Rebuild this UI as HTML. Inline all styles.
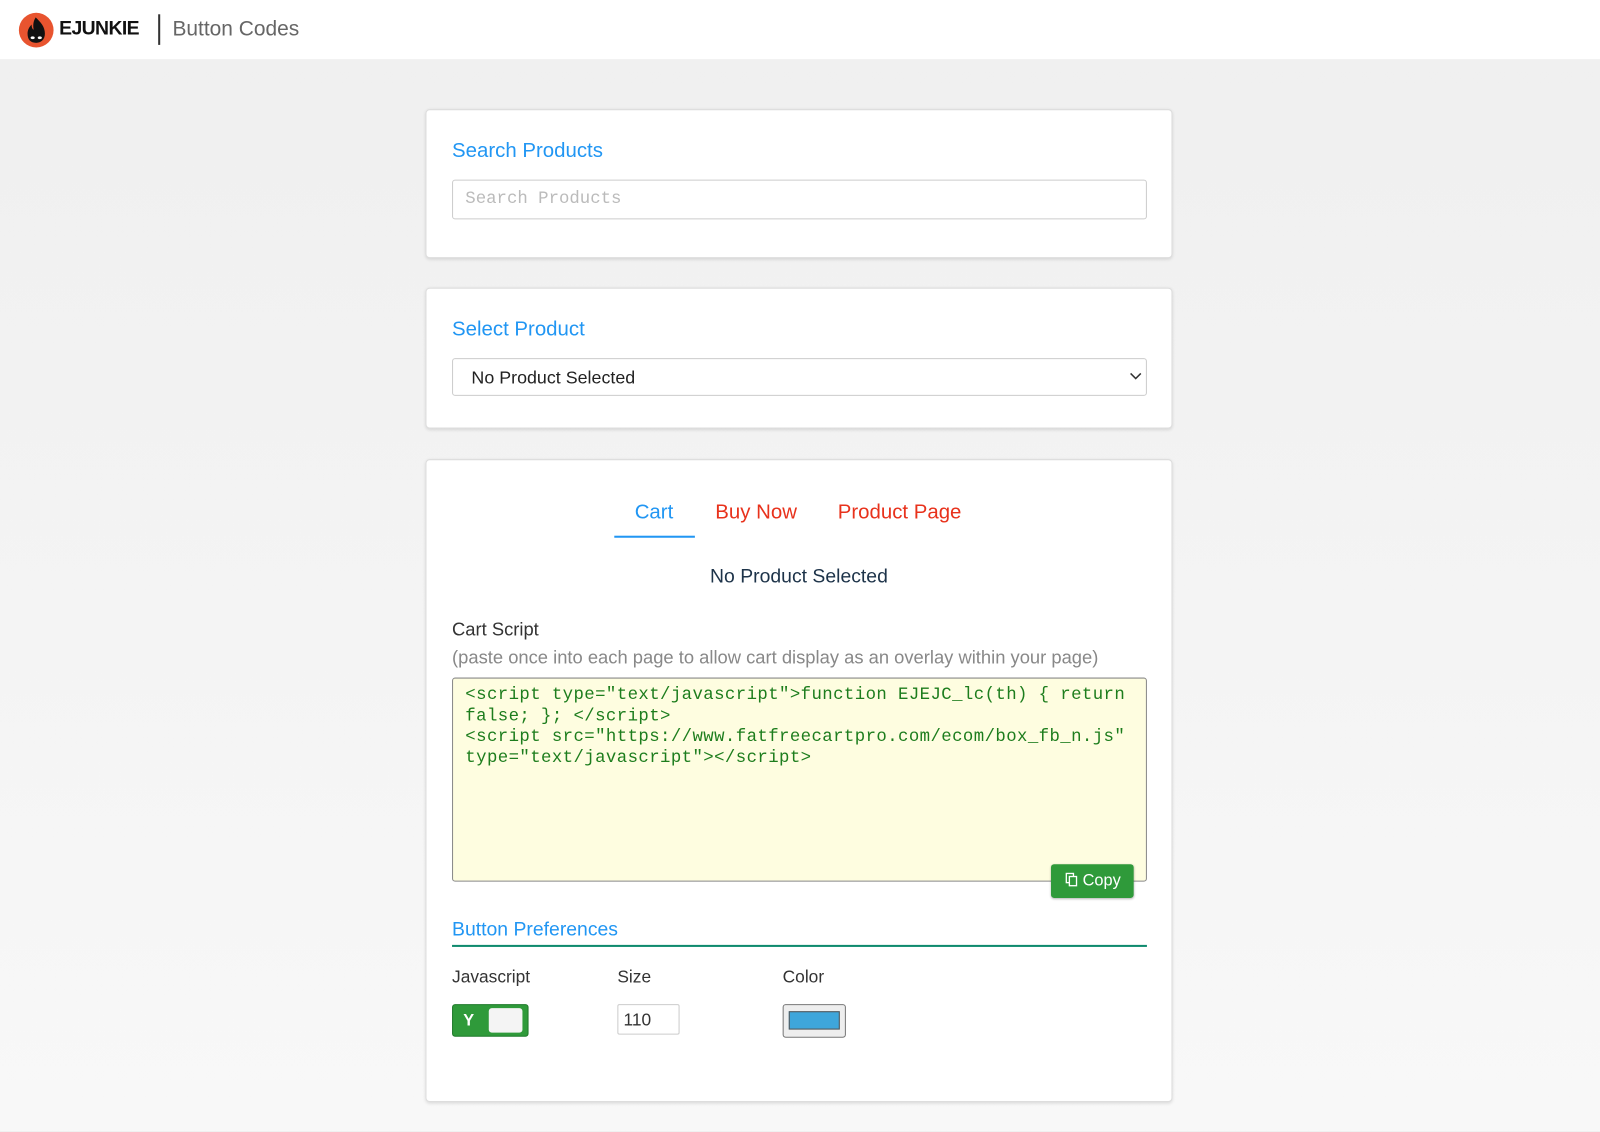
<!DOCTYPE html>
<html><head><meta charset="utf-8"><style>
*{box-sizing:border-box;margin:0;padding:0}
html,body{width:1600px;height:1131px;overflow:hidden}
body{font-family:"Liberation Sans",sans-serif;background:linear-gradient(#efefef,#f8f8f8);color:#333}
#w{position:absolute;left:0;top:0;width:1568px;height:1109px;transform:scale(1.0204);transform-origin:0 0}
.hdr{position:absolute;left:0;top:0;width:1568px;height:58px;background:#fff}
.card{position:absolute;left:417px;width:732px;background:#fff;border:1px solid #ddd;border-radius:4px;box-shadow:0 1px 3px rgba(0,0,0,.12)}
.abs{position:absolute}
.blue{color:#2196f3}
</style></head><body><div id="w">
<div class="hdr">
 <svg class="abs" style="left:18px;top:12px" width="35" height="35" viewBox="0 0 35 35"><circle cx="17.5" cy="17.5" r="17" fill="#e8542f"/><path d="M17 5 C22 10 26 14 26 21 C26 27 22 30 17.5 30 C12 30 9 27 9 21 C9 17 11 14 13 12 C13 15 14 17 15 17 C14 12 15 8 17 5Z" fill="#111"/><ellipse cx="14" cy="25" rx="2" ry="1.3" fill="#fff"/><ellipse cx="21" cy="25" rx="2" ry="1.3" fill="#fff"/></svg>
 <div class="abs" style="left:58px;top:18px;font-size:19px;font-weight:bold;color:#111;letter-spacing:-0.6px">EJUNKIE</div>
 <div class="abs" style="left:155px;top:14px;width:2px;height:30px;background:#333"></div>
 <div class="abs" style="left:169px;top:17px;font-size:20.5px;color:#666">Button Codes</div>
</div>

<div class="card" style="top:107px;height:146px">
 <div class="abs blue" style="left:25px;top:29px;font-size:20px">Search Products</div>
 <div class="abs" style="left:25px;top:68px;width:681px;height:39px;border:1px solid #ccc;border-radius:3px;font-family:'Liberation Mono',monospace;font-size:17px;color:#bbb;padding:9px 12px">Search Products</div>
</div>

<div class="card" style="top:282px;height:138px">
 <div class="abs blue" style="left:25px;top:29px;font-size:20px">Select Product</div>
 <div class="abs" style="left:25px;top:68px;width:681px;height:37px;border:1px solid #ccc;border-radius:3px;font-size:17.5px;color:#222;padding:8px 18px">No Product Selected</div>
 <svg class="abs" style="left:689px;top:82px" width="12" height="8" viewBox="0 0 12 8"><path d="M1 1l5 5 5-5" stroke="#333" stroke-width="1.5" fill="none"/></svg>
</div>

<div class="card" style="top:450px;height:630px">
 <div class="abs blue" style="left:204px;top:40px;font-size:20px">Cart</div>
 <div class="abs" style="left:184px;top:74px;width:79px;height:2px;background:#2196f3"></div>
 <div class="abs" style="left:283px;top:40px;font-size:20px;color:#e8321c">Buy Now</div>
 <div class="abs" style="left:403px;top:40px;font-size:20px;color:#e8321c">Product Page</div>
 <div class="abs" style="left:0;width:730px;top:104px;text-align:center;font-size:19px;color:#1d3349">No Product Selected</div>
 <div class="abs" style="left:25px;top:156px;font-size:18px;color:#333">Cart Script</div>
 <div class="abs" style="left:25px;top:183px;font-size:18px;color:#888">(paste once into each page to allow cart display as an overlay within your page)</div>
 <div class="abs" style="left:25px;top:213px;width:681px;height:200px;border:1px solid #888;border-radius:3px;background:#fefde0;padding:7px 12px;font-family:'Liberation Mono',monospace;font-size:17px;letter-spacing:0.4px;line-height:20.5px;color:#1d7d1d;white-space:pre">&lt;script type="text/javascript"&gt;function EJEJC_lc(th) { return
false; }; &lt;/script&gt;
&lt;script src="https://www.fatfreecartpro.com/ecom/box_fb_n.js"
type="text/javascript"&gt;&lt;/script&gt;</div>
 <div class="abs" style="left:612px;top:396px;width:81px;height:33px;background:#2f9a3a;border-radius:3px;color:#fff;font-size:16px;padding:8px 0 0 31px;box-shadow:0 1px 2px rgba(0,0,0,.3)">Copy</div>
 <svg class="abs" style="left:626px;top:404px" width="12" height="14" viewBox="0 0 12 14"><rect x="1" y="1" width="7" height="9" fill="none" stroke="#fff" stroke-width="1.3"/><rect x="4" y="4" width="7" height="9" fill="#2f9a3a" stroke="#fff" stroke-width="1.3"/></svg>
 <div class="abs blue" style="left:25px;top:450px;font-size:19px">Button Preferences</div>
 <div class="abs" style="left:25px;top:475px;width:681px;height:2px;background:#0f8a6e"></div>
 <div class="abs" style="left:25px;top:497px;font-size:17px">Javascript</div>
 <div class="abs" style="left:187px;top:497px;font-size:17px">Size</div>
 <div class="abs" style="left:349px;top:497px;font-size:17px">Color</div>
 <div class="abs" style="left:25px;top:533px;width:75px;height:32px;background:#2f9a3a;border:1px solid #1f7a2a;border-radius:3px"><span style="position:absolute;left:10px;top:7px;color:#fff;font-weight:bold;font-size:16px">Y</span><div style="position:absolute;left:35px;top:3px;width:33px;height:24px;background:#f4f4f4;border-radius:3px"></div></div>
 <div class="abs" style="left:187px;top:533px;width:61px;height:30px;border:1px solid #ccc;border-radius:2px;font-size:17px;padding:5px 5px">110</div>
 <div class="abs" style="left:349px;top:533px;width:62px;height:33px;border:1px solid #777;border-radius:3px;background:#eee;padding:6px 5px"><div style="width:50px;height:18px;background:#3ea6db;border:1px solid #555"></div></div>
</div>
</div></body></html>
